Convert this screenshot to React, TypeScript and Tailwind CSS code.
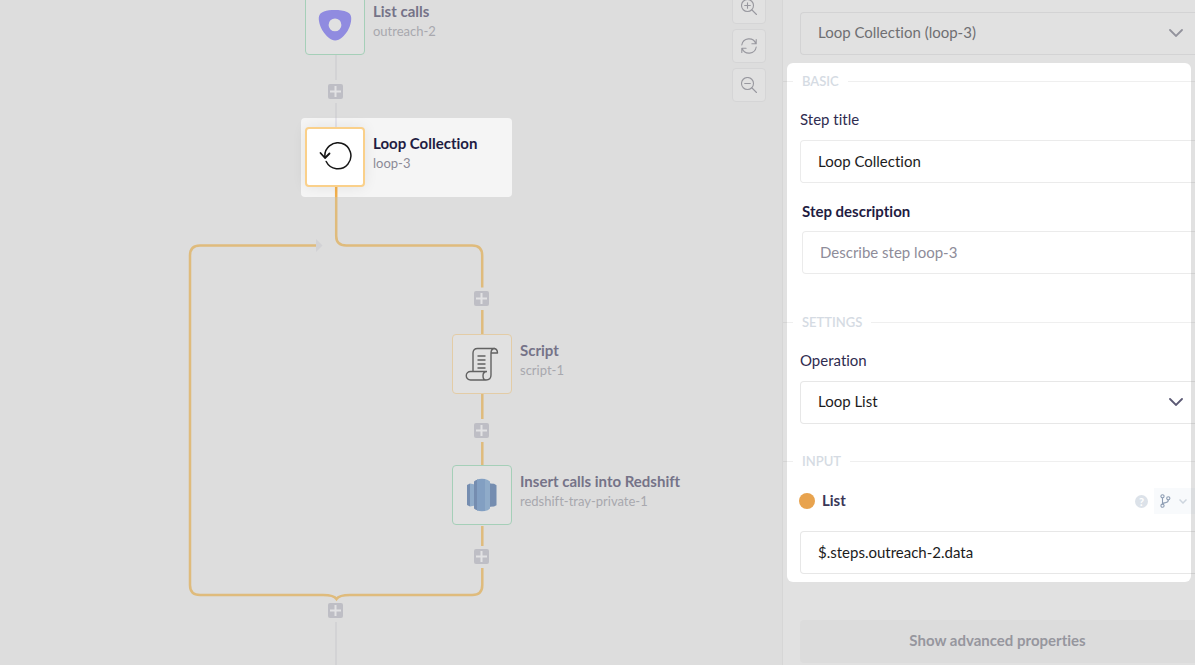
import type { ReactNode } from "react";

type StepProps = {
  title: string;
  name: string;
  place: string;
  box: string;
  active?: boolean;
  children: ReactNode;
};

function Step({ title, name, place, box, active, children }: StepProps) {
  return (
    <div className={`absolute flex gap-2 ${place}`}>
      <div
        className={`flex size-[60px] shrink-0 items-center justify-center rounded ${box}`}
      >
        {children}
      </div>
      <div className="pt-1.5 whitespace-nowrap">
        <h2
          className={`text-[15px] leading-5 font-bold ${active ? "text-[#1f1c42]" : "text-[#757388]"}`}
        >
          {title}
        </h2>
        <p
          className={`text-[13px] leading-5 ${active ? "text-[#8b8a97]" : "text-[#a8a8ae]"}`}
        >
          {name}
        </p>
      </div>
    </div>
  );
}

function AddButton({ place }: { place: string }) {
  return (
    <button
      type="button"
      aria-label="Add step"
      className={`absolute size-[15px] rounded-xs bg-[#bebec5] ${place}`}
    >
      <svg viewBox="0 0 15 15" className="size-[15px]" stroke="#e2e2e4" strokeWidth="2">
        <path d="M7.5 2v11M2 7.5h11" />
      </svg>
    </button>
  );
}

function ZoomButton({ label, children }: { label: string; children: ReactNode }) {
  return (
    <button
      type="button"
      aria-label={label}
      className="flex size-[34px] items-center justify-center rounded border border-[#d5d5d6] bg-[#e1e1e1]"
    >
      <svg
        viewBox="0 0 16 16"
        className="size-4"
        fill="none"
        stroke="#98989f"
        strokeWidth="1.1"
        strokeLinecap="round"
        strokeLinejoin="round"
      >
        {children}
      </svg>
    </button>
  );
}

function Chevron({ color }: { color: string }) {
  return (
    <svg
      viewBox="0 0 14 8"
      className="pointer-events-none absolute top-[17px] right-3 h-2 w-3.5"
      fill="none"
      stroke={color}
      strokeWidth="1.8"
      strokeLinecap="round"
    >
      <path d="M1 1l6 6 6-6" />
    </svg>
  );
}

function Legend({ children }: { children: string }) {
  return (
    <div className="-mx-1 flex h-5 items-center gap-[9px]">
      <span className="h-px w-2.5 bg-[#80808020]" />
      <h3 className="text-[13px] leading-5 font-semibold text-[#d5dbe3]">{children}</h3>
      <span className="h-px flex-1 bg-[#80808020]" />
    </div>
  );
}

const field =
  "h-[43px] w-full appearance-none rounded-l border border-r-0 bg-transparent pb-0.5 pl-[17px] text-[15px] outline-none";

function Canvas() {
  return (
    <main className="relative flex-1 overflow-hidden bg-[#ddd]">
      <div className="absolute top-[118px] left-[301px] h-[79px] w-[211px] rounded bg-[#f5f5f5]" />

      {/* connectors between the steps */}
      <svg
        className="absolute top-0 left-0 h-[665px] w-[520px]"
        viewBox="0 0 520 665"
        fill="none"
        strokeWidth="2.5"
      >
        <path d="M336 55v25M336 103v15M336 622v43" stroke="#d3d3d5" strokeWidth="2" />
        <path d="M336 118v9" stroke="#e4e3ea" strokeWidth="2" />
        <path d="M336.2 187v10" stroke="#f3b04c" />
        <path
          d="M336.2 197v39q0 9.5 10 9.5h126q10 0 10 10v32M482.3 310v24M482.3 394v25M482.3 442v23M482.3 526v20M482.3 568v17q0 10-10 10H350q-11 0-13.5 4Q334 595 323 595H200q-10 0-10-10V255.500q0-10 10-10h116"
          stroke="#dfbb7c"
        />
        <path d="M316 239l6.5 6.5-6.5 6.5z" fill="#d2d2d5" />
      </svg>

      <Step
        title="List calls"
        name="outreach-2"
        place="top-[-5px] left-[305px]"
        box="border border-[#a5cfb8] bg-[#e1e1e1]"
      >
        <svg viewBox="0 0 34 34" className="size-[34px]">
          <path
            fill="#908be0"
            fillRule="evenodd"
            d="M6 3.500C12 1.500 23 1.500 29 4c4 1.800 4.800 5 4 9.500-1.200 7-4.500 12-9 16-4 3.600-9 4-13 .5C5.500 25.500 2 19.500 1 13 .3 8 1.500 5 6 3.500zM17 10.500a6.400 6.400 0 1 0 0 12.800 6.400 6.400 0 0 0 0-12.800z"
          />
        </svg>
      </Step>

      <Step
        title="Loop Collection"
        name="loop-3"
        place="top-[127px] left-[305px]"
        box="border-2 border-[#fad08a] bg-white shadow-[0_0_14px_rgba(0,0,0,0.08)]"
        active
      >
        <svg
          viewBox="0 0 34 30"
          className="h-[30px] w-[34px]"
          fill="none"
          stroke="#151515"
          strokeWidth="1.5"
          strokeLinecap="round"
          strokeLinejoin="round"
        >
          <path d="M7 15.500a13 13 0 1 1 1.200 4" />
          <path d="M2.500 11l4.500 5 4.500-4.500" strokeWidth="1.8" />
        </svg>
      </Step>

      <Step
        title="Script"
        name="script-1"
        place="top-[334px] left-[452px]"
        box="border border-[#e3cca6] bg-[#e1e1e1]"
      >
        <svg
          viewBox="0 0 34 34"
          className="size-[34px]"
          fill="none"
          stroke="#626262"
          strokeWidth="1.4"
          strokeLinejoin="round"
        >
          <path d="M8 24.500V6q0-4.500 4.500-4.500h16q4 0 4 4.500h-6.500M30 1.500q-4 0-4 4.500v22q0 5-5 5H5.500a4.250 4.250 0 0 1 0-8.500H22M22 24.500q-4 0-4 4.250T21 33" />
          <path d="M12.500 9h8M12.500 13h8M12.500 17h8M12.500 21h8" strokeWidth="1.6" />
        </svg>
      </Step>

      <Step
        title="Insert calls into Redshift"
        name="redshift-tray-private-1"
        place="top-[465px] left-[452px]"
        box="border border-[#a5cfb8] bg-[#e1e1e1]"
      >
        <svg viewBox="0 0 34 34" className="size-[34px]">
          <path fill="#758db0" d="M2 7l3-1.500v23L2 27z" />
          <path fill="#8fabc9" d="M5 5.500l5 1v21l-5 1z" />
          <path fill="#8fabc9" d="M23 6.500l3-1v23l-3-1z" />
          <path fill="#758db0" d="M25 5.500l4 .2 2.500 1.500v20l-2.500 1.300-4 .2z" />
          <path fill="#758db0" d="M9 3.500Q10.500 2 13 1.500v31Q10.500 32 9 30.500z" />
          <path fill="#829fc2" d="M12 1.500Q15 .5 20 1v32q-5 .5-8-.5z" />
          <path fill="#8fabc9" d="M20 1q3 .5 5 2.500v27Q23 32.500 20 33z" />
        </svg>
      </Step>

      <AddButton place="top-[84px] left-[328px]" />
      <AddButton place="top-[291px] left-[474px]" />
      <AddButton place="top-[423px] left-[474px]" />
      <AddButton place="top-[549px] left-[474px]" />
      <AddButton place="top-[603px] left-[328px]" />

      <div className="absolute -top-2.5 right-4 flex flex-col gap-[5px]">
        <ZoomButton label="Zoom in">
          <circle cx="6.500" cy="6.500" r="6" />
          <path d="M11 11l4.500 4.500M6.500 3.700v5.600M3.700 6.500h5.600" />
        </ZoomButton>
        <ZoomButton label="Reset zoom">
          <path d="M.8 7A7.300 7.300 0 0 1 14.800 5.500M15.200 1.500v4.300h-4.300M15.200 9A7.300 7.300 0 0 1 1.200 10.500M.8 14.500v-4.300h4.300" />
        </ZoomButton>
        <ZoomButton label="Zoom out">
          <circle cx="6.500" cy="6.500" r="6" />
          <path d="M11 11l4.500 4.500M3.700 6.500h5.600" />
        </ZoomButton>
      </div>
    </main>
  );
}

function Properties() {
  return (
    <aside className="w-[413px] shrink-0 overflow-hidden border-l border-[#d6d6d6] bg-[#e1e1e1] pt-3">
      <div className="relative ml-[17px]">
        <select aria-label="Step" className={`${field} border-[#d3d3d4] text-[#6f6f72]`}>
          <option>Loop Collection (loop-3)</option>
        </select>
        <Chevron color="#92929c" />
      </div>

      <form className="mx-1 mt-2 rounded-md bg-white pt-2 pb-2">
        <Legend>BASIC</Legend>
        <div className="mt-4 -mr-1 ml-[13px]">
          <label htmlFor="title" className="block text-[15px] leading-6 text-[#2f2c50]">
            Step title
          </label>
          <input
            id="title"
            defaultValue="Loop Collection"
            className={`${field} mt-[9px] border-[#80808028] text-[#1c1c1c]`}
          />
        </div>
        <div className="mt-4 -mr-1 ml-[15px]">
          <label
            htmlFor="description"
            className="block text-[15px] leading-6 font-bold text-[#1f1c42]"
          >
            Step description
          </label>
          <input
            id="description"
            placeholder="Describe step loop-3"
            className={`${field} mt-2 border-[#80808028] placeholder:text-[#8e8c99]`}
          />
        </div>

        <div className="mt-[38px]">
          <Legend>SETTINGS</Legend>
        </div>
        <div className="mt-4 -mr-1 ml-[13px]">
          <label htmlFor="operation" className="block text-[15px] leading-6 text-[#2f2c50]">
            Operation
          </label>
          <div className="relative mt-[9px]">
            <select
              id="operation"
              className={`${field} border-[#80808030] text-[#1c1c1c]`}
            >
              <option>Loop List</option>
            </select>
            <Chevron color="#5b5974" />
          </div>
        </div>

        <div className="mt-[27px]">
          <Legend>INPUT</Legend>
        </div>
        <div className="mt-[17px] -mr-1 ml-[13px]">
          <div className="flex h-[26px] items-center">
            <span className="-ml-px size-4 rounded-full bg-[#e8a34e]" />
            <label
              htmlFor="list"
              className="ml-[7px] flex-1 pb-0.5 text-[15px] leading-6 font-bold text-[#3a3757]"
            >
              List
            </label>
            <button
              type="button"
              aria-label="Help"
              className="mr-1.5 size-[13px] rounded-full bg-[#dce2e9] text-[11px] leading-[13px] font-bold text-white"
            >
              ?
            </button>
            <button
              type="button"
              aria-label="Value type"
              className="flex h-[26px] w-[41px] items-center gap-2 bg-[#90b0d010] pl-1.5"
            >
              <svg
                viewBox="0 0 11 14"
                className="h-3.5 w-[11px]"
                fill="none"
                stroke="#8d9db3"
                strokeWidth="1.1"
              >
                <circle cx="2.500" cy="2.300" r="1.600" />
                <circle cx="2.500" cy="11.700" r="1.600" />
                <circle cx="8.300" cy="4.300" r="1.600" />
                <path d="M2.500 4v6M8.300 6q0 2.300-2.800 2.600-2.500.2-3 1.500" />
              </svg>
              <svg
                viewBox="0 0 8 5"
                className="h-[5px] w-2"
                fill="none"
                stroke="#cdd5de"
                strokeWidth="1.5"
              >
                <path d="M.5.5L4 4 7.500.5" />
              </svg>
            </button>
          </div>
          <input
            id="list"
            defaultValue="$.steps.outreach-2.data"
            className={`${field} mt-[17px] border-[#80808030] text-[#1c1c1c]`}
          />
        </div>
      </form>

      <button
        type="button"
        className="mt-[38px] ml-[17px] block h-[43px] w-full rounded bg-[#dcdcdc] pr-[17px] pb-0.5 text-[15px] font-bold text-[#96969e]"
      >
        Show advanced properties
      </button>
    </aside>
  );
}

export default function App() {
  return (
    <div className="flex min-h-screen bg-[#ddd] font-['Lato',sans-serif] [font-variant-ligatures:none]">
      <Canvas />
      <Properties />
    </div>
  );
}
